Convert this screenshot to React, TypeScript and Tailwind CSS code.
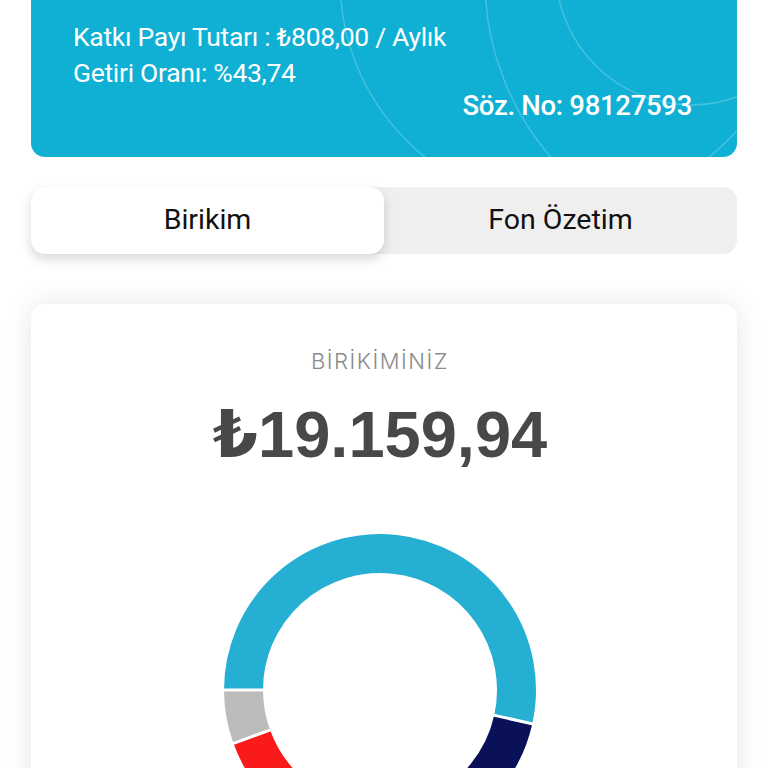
import React from "react";

function polar(cx: number, cy: number, r: number, deg: number) {
  const a = ((deg - 90) * Math.PI) / 180;
  return [cx + r * Math.cos(a), cy + r * Math.sin(a)];
}

function arcPath(cx: number, cy: number, r: number, a0: number, a1: number) {
  const [x0, y0] = polar(cx, cy, r, a0);
  const [x1, y1] = polar(cx, cy, r, a1);
  const large = a1 - a0 > 180 ? 1 : 0;
  return `M ${x0} ${y0} A ${r} ${r} 0 ${large} 1 ${x1} ${y1}`;
}

function Donut() {
  const cx = 160;
  const cy = 160;
  const rMid = 136.5;
  const w = 39;
  const segs = [
    { a0: -90, a1: 102.5, c: "#25afd3" },
    { a0: 102.5, a1: 160, c: "#0b1159" },
    { a0: 160, a1: 215, c: "#f5a623" },
    { a0: 215, a1: 250, c: "#fb1a1a" },
    { a0: 250, a1: 270, c: "#bcbcbc" },
  ];
  const bounds = [-90, 102.5, 160, 215, 250];
  return (
    <svg width="320" height="320" viewBox="0 0 320 320">
      {segs.map((s, i) => (
        <path key={i} d={arcPath(cx, cy, rMid, s.a0, s.a1)} stroke={s.c} strokeWidth={w} fill="none" />
      ))}
      {bounds.map((b, i) => {
        const [x0, y0] = polar(cx, cy, rMid - w / 2 - 2, b);
        const [x1, y1] = polar(cx, cy, rMid + w / 2 + 2, b);
        return <line key={i} x1={x0} y1={y0} x2={x1} y2={y1} stroke="#ffffff" strokeWidth={3} />;
      })}
    </svg>
  );
}

export default function App() {
  return (
    <div className="w-[768px] h-[768px] overflow-hidden bg-white" style={{ fontFamily: "Roboto, 'Liberation Sans', 'DejaVu Sans', sans-serif" }}>
      <div className="px-[31px]">
        {/* Header card */}
        <div className="relative h-[157px] bg-[#0fb0d4] rounded-b-[14px] overflow-hidden text-white">
          <svg className="absolute inset-0" width="706" height="157" viewBox="0 0 706 157">
            <g fill="none" stroke="#ffffff" strokeOpacity="0.22" strokeWidth="1.5">
              <circle cx={536} cy={-20} r={227} />
              <circle cx={726} cy={-20} r={272} />
              <circle cx={660} cy={-30} r={135} />
            </g>
          </svg>
          <div className="relative pl-[42px] pr-[45px] pt-[19px] flex flex-col">
            <div className="text-[26.5px] leading-[36px] tracking-[-0.3px]">Katkı Payı Tutarı : ₺808,00 / Aylık</div>
            <div className="text-[26.5px] leading-[36px] tracking-[-0.3px]">Getiri Oranı: %43,74</div>
            <div className="text-[27.5px] leading-[30px] font-medium self-end tracking-[-0.3px]">Söz. No: 98127593</div>
          </div>
        </div>

        {/* Tabs */}
        <div className="mt-[30px] h-[67px] bg-[#efefef] rounded-[14px] flex">
          <div className="w-1/2 h-full bg-white rounded-[14px] shadow-[0_5px_12px_rgba(0,0,0,0.16)] flex items-center justify-center text-[28.5px] text-[#111111]">
            Birikim
          </div>
          <div className="w-1/2 h-full flex items-center justify-center text-[28.5px] text-[#111111]">Fon Özetim</div>
        </div>

        {/* Card */}
        <div className="mt-[50px] h-[520px] bg-white rounded-[14px] shadow-[0_0_28px_rgba(0,0,0,0.1)] flex flex-col items-center pr-[8px]">
          <div className="mt-[44px] text-[22px] leading-[26px] text-[#8a8a8a] font-light tracking-[1.5px]" style={{ fontFamily: "Inter, 'Liberation Sans', sans-serif" }}>
            BİRİKİMİNİZ
          </div>
          <div className="mt-[29px] text-[65px] leading-[64px] font-bold text-[#484848]" style={{ fontFamily: "'Liberation Sans', 'DejaVu Sans', sans-serif" }}>
            ₺19.159,94
          </div>
          <div className="mt-[63px]">
            <Donut />
          </div>
        </div>
      </div>
    </div>
  );
}
